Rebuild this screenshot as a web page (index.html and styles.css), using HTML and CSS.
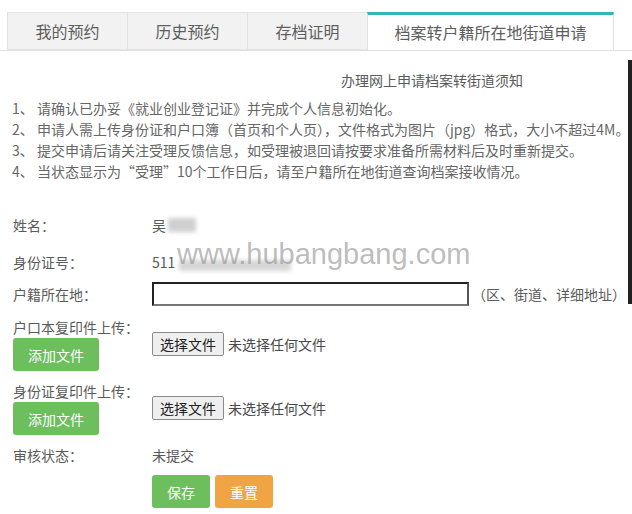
FILE: index.html
```html
<!DOCTYPE html>
<html lang="zh-CN">
<head>
    <meta charset="UTF-8">
    <title>档案转户籍所在地街道申请</title>
    <link rel="stylesheet" href="styles.css">
</head>
<body>

<div class="page">
    <div class="tabs">
        <div class="tab">我的预约</div>
        <div class="tab">历史预约</div>
        <div class="tab">存档证明</div>
        <div class="tab active">档案转户籍所在地街道申请</div>
    </div>

    <div class="notice">
        <div class="notice-title">办理网上申请档案转街道须知</div>
        <p>1、 请确认已办妥《就业创业登记证》并完成个人信息初始化。</p>
        <p>2、 申请人需上传身份证和户口簿（首页和个人页），文件格式为图片（jpg）格式，大小不超过4M。</p>
        <p>3、 提交申请后请关注受理反馈信息，如受理被退回请按要求准备所需材料后及时重新提交。</p>
        <p>4、 当状态显示为“受理”10个工作日后，请至户籍所在地街道查询档案接收情况。</p>
    </div>

    <form class="apply-form">
        <div class="form-row">
            <div class="label">姓名：</div>
            <div class="value">吴<span class="blur blur-name"></span></div>
        </div>
        <div class="form-row">
            <div class="label">身份证号：</div>
            <div class="value">511<span class="blur blur-id"></span></div>
        </div>
        <div class="form-row row-input">
            <div class="label">户籍所在地：</div>
            <input type="text" class="address">
            <span class="hint">（区、街道、详细地址）</span>
        </div>
        <div class="upload-row">
            <div class="upload-left">
                <div class="label">户口本复印件上传：</div>
                <button type="button" class="btn btn-green btn-add">添加文件</button>
            </div>
            <div class="file-pick">
                <button type="button" class="file-btn">选择文件</button>
                <span class="file-none">未选择任何文件</span>
            </div>
        </div>
        <div class="upload-row">
            <div class="upload-left">
                <div class="label">身份证复印件上传：</div>
                <button type="button" class="btn btn-green btn-add">添加文件</button>
            </div>
            <div class="file-pick">
                <button type="button" class="file-btn">选择文件</button>
                <span class="file-none">未选择任何文件</span>
            </div>
        </div>
        <div class="form-row row-status">
            <div class="label">审核状态：</div>
            <div class="value">未提交</div>
        </div>
        <div class="actions">
            <button type="button" class="btn btn-green btn-small">保存</button>
            <button type="button" class="btn btn-orange btn-small">重置</button>
        </div>
    </form>

    <div class="watermark">www.hubangbang.com</div>
    <div class="edge"></div>
</div>

</body>
</html>
```

FILE: styles.css
```css
body {
    margin: 0;
    background-color: #fff;
    font-family: "Noto Sans CJK SC", "Liberation Sans", sans-serif;
    font-size: 14px;
    color: #5a5a5a;
}
.page {
    position: relative;
    width: 632px;
    height: 514px;
    overflow: hidden;
}
.tabs {
    display: flex;
    margin-top: 12px;
    padding-left: 7px;
    border-bottom: 1px solid #e2e2e2;
    height: 38px;
}
.tab {
    width: 120px;
    height: 38px;
    line-height: 36px;
    text-align: center;
    font-size: 16px;
    color: #5e5e5e;
    background-color: #f2f2f2;
    border: 1px solid #e2e2e2;
    border-right: none;
    box-sizing: border-box;
}
.tab.active {
    width: 247px;
    background-color: #fff;
    border-top: 3px solid #33b5c0;
    border-right: 1px solid #e2e2e2;
    height: 39px;
    line-height: 34px;
}
.notice {
    margin-top: 19px;
    padding-left: 12px;
}
.notice-title {
    padding-left: 329px;
    line-height: 21px;
    color: #5a5a5a;
    margin-bottom: 7px;
}
.notice p {
    margin: 0;
    line-height: 21px;
    color: #666;
    white-space: nowrap;
}
.apply-form {
    margin-top: 26px;
    padding-left: 13px;
    display: flex;
    flex-direction: column;
    gap: 3px;
}
.form-row {
    display: flex;
    align-items: center;
    height: 34px;
}
.label {
    width: 139px;
    flex-shrink: 0;
    line-height: 20px;
    color: #5a5a5a;
}
.value {
    color: #5a5a5a;
    display: flex;
    align-items: center;
}
.blur {
    display: inline-block;
    background-color: #cfcfcf;
    filter: blur(2px);
}
.blur-name {
    width: 28px;
    height: 14px;
    margin-left: 2px;
}
.blur-id {
    width: 112px;
    height: 11px;
    margin-left: 4px;
    margin-top: 6px;
    background-color: #d6d6d6;
}
.row-input {
    height: 24px;
}
.address {
    width: 317px;
    height: 24px;
    box-sizing: border-box;
    border: 2px solid #222;
    border-right-color: #555;
    border-bottom-color: #777;
    padding: 0 4px;
    margin: 0;
}
.hint {
    margin-left: 3px;
    color: #5a5a5a;
    white-space: nowrap;
}
.upload-row {
    display: flex;
    margin-top: 8px;
}
.upload-row + .upload-row,
.upload-row + .row-status {
    margin-top: 7px;
}
.upload-left {
    width: 139px;
    display: flex;
    flex-direction: column;
    align-items: flex-start;
}
.upload-left .label {
    white-space: nowrap;
}
.btn {
    border: none;
    border-radius: 3px;
    color: #fff;
    font-family: inherit;
    font-size: 14px;
    padding: 0;
    cursor: pointer;
}
.btn-green {
    background-color: #6dbe5d;
}
.btn-orange {
    background-color: #f0a444;
}
.btn-add {
    width: 86px;
    height: 33px;
    margin-top: 1px;
}
.file-pick {
    display: flex;
    align-items: center;
    margin-top: 15px;
    height: 24px;
}
.file-btn {
    width: 72px;
    height: 24px;
    padding: 0;
    font-family: inherit;
    font-size: 14px;
    color: #222;
    background-color: #efefef;
    border: 1px solid #8a8a8a;
    border-radius: 2px;
}
.file-none {
    margin-left: 4px;
    color: #4a4a4a;
}
.row-status {
    height: 20px;
}
.actions {
    display: flex;
    gap: 5px;
    padding-left: 139px;
    margin-top: 7px;
}
.btn-small {
    width: 58px;
    height: 33px;
}
.watermark {
    position: absolute;
    left: 177px;
    top: 240px;
    font-family: "Liberation Sans", sans-serif;
    font-size: 29px;
    line-height: 29px;
    color: rgba(150, 150, 150, 0.65);
    pointer-events: none;
}
.edge {
    position: absolute;
    right: 0;
    top: 60px;
    width: 4px;
    height: 244px;
    background-color: #222;
}
```
